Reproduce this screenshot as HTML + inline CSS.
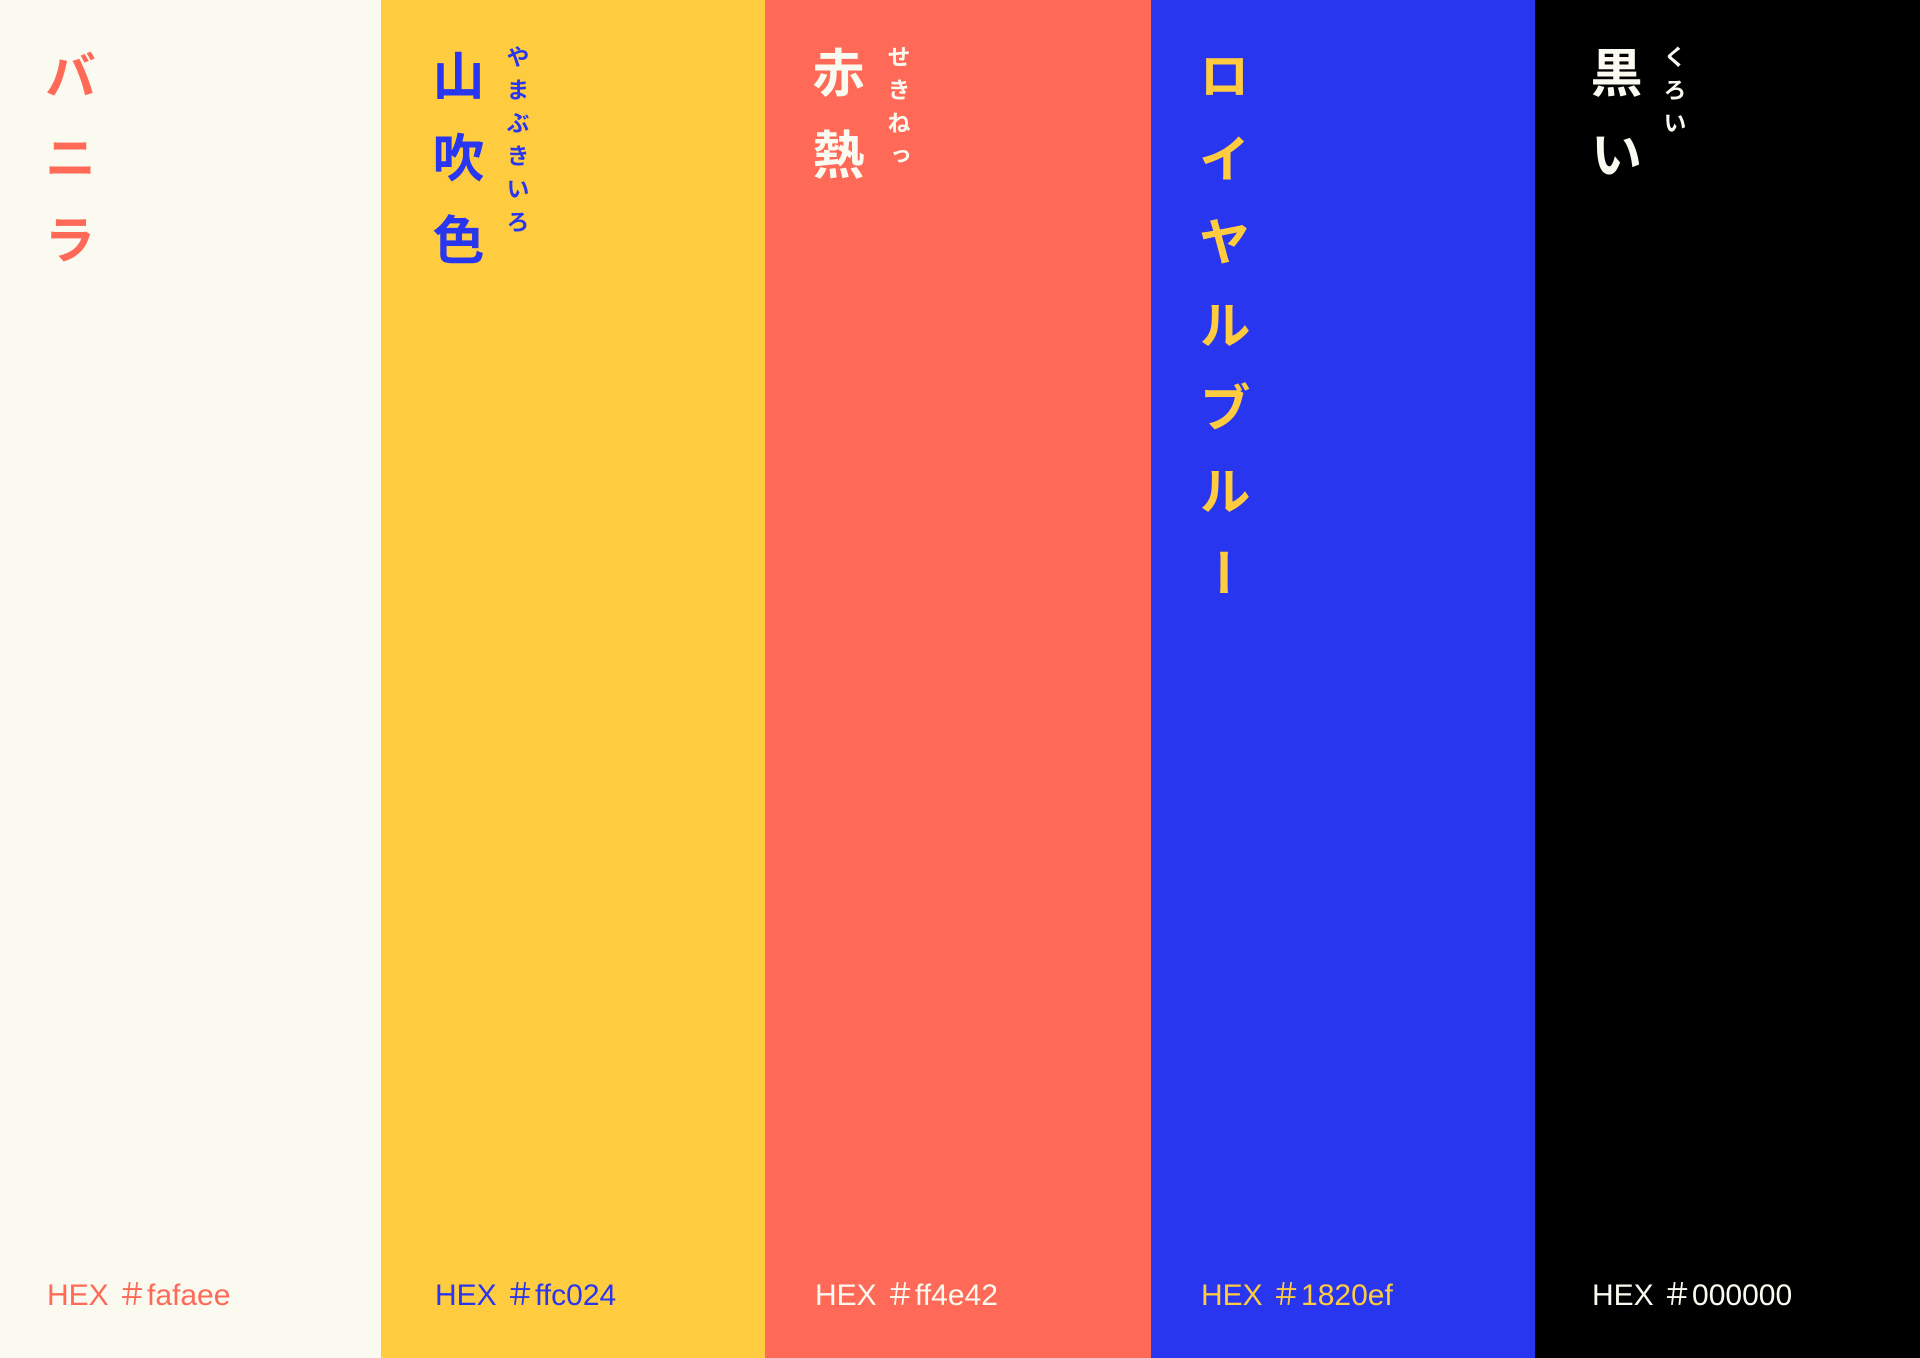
<!DOCTYPE html>
<html><head><meta charset="utf-8"><style>
html,body{margin:0;padding:0;width:1920px;height:1358px;overflow:hidden}
.c{position:absolute;top:0;height:1358px}
.t{position:absolute;writing-mode:vertical-rl;font-family:"Liberation Sans","Noto Sans CJK JP",sans-serif;font-weight:700;font-size:52px;line-height:52px;letter-spacing:30px;top:49px;white-space:nowrap}
.f{position:absolute;writing-mode:vertical-rl;font-family:"Liberation Sans","Noto Sans CJK JP",sans-serif;font-weight:700;font-size:23px;line-height:23px;letter-spacing:10px;top:45px;white-space:nowrap}
.h{position:absolute;top:1278px;font-family:"Liberation Sans","Noto Sans CJK JP",sans-serif;font-size:30px;line-height:36px;white-space:nowrap}
</style></head><body>
<div class="c" style="left:0;width:381px;background:#fbfaf1"></div>
<div class="c" style="left:381px;width:384px;background:#ffcb3f"></div>
<div class="c" style="left:765px;width:386px;background:#ff6957"></div>
<div class="c" style="left:1151px;width:384px;background:#2936ef"></div>
<div class="c" style="left:1535px;width:385px;background:#000"></div>

<div class="t" style="left:39px;color:#ff6957">バニラ</div>

<div class="t" style="left:427px;color:#2936ef">山吹色</div>
<div class="f" style="left:504px;color:#2936ef">やまぶきいろ</div>

<div class="t" style="left:807px;top:46px;color:#fbfaf1">赤熱</div>
<div class="f" style="left:885px;color:#fbfaf1">せきねっ</div>

<div class="t" style="left:1193px;letter-spacing:31px;color:#ffcb3f">ロイヤルブルー</div>

<div class="t" style="left:1585px;top:46px;color:#fbfaf1">黒い</div>
<div class="f" style="left:1661px;color:#fbfaf1">くろい</div>

<div class="h" style="left:47px;color:#ff6957">HEX ＃fafaee</div>
<div class="h" style="left:435px;color:#2936ef">HEX ＃ffc024</div>
<div class="h" style="left:815px;color:#fbfaf1">HEX ＃ff4e42</div>
<div class="h" style="left:1201px;color:#ffcb3f">HEX ＃1820ef</div>
<div class="h" style="left:1592px;color:#fbfaf1">HEX ＃000000</div>
</body></html>
